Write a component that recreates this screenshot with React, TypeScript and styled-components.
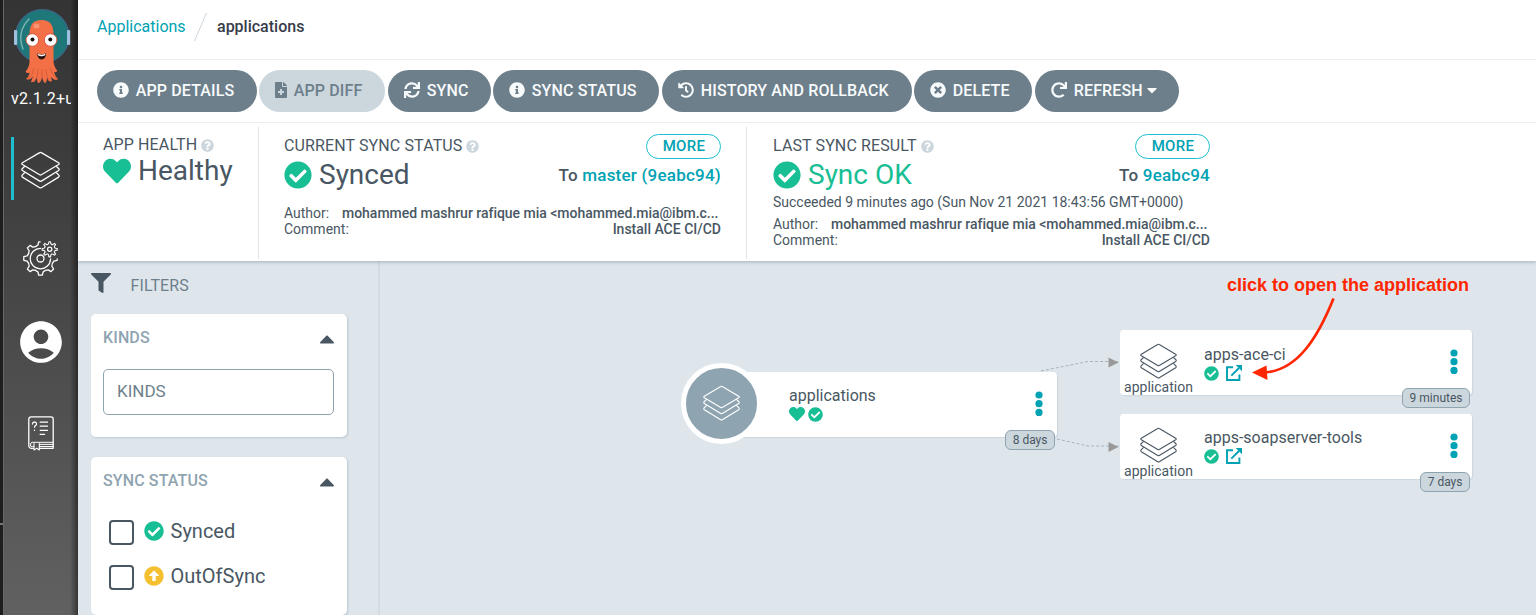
import React from 'react';
import styled, { createGlobalStyle, css } from 'styled-components';
import {
  FaArrowAltCircleUp, FaCaretDown, FaCaretUp, FaCheckCircle, FaFileMedical, FaFilter, FaHeart,
  FaHistory, FaInfoCircle, FaQuestionCircle, FaRedo, FaSync, FaTimesCircle,
} from 'react-icons/fa';
import { MdAccountCircle } from 'react-icons/md';

const color = {
  ink: '#495763',
  dark: '#363c4a',
  slate: '#6d7f8b',
  mist: '#8fa4b1',
  fog: '#ccd6dd',
  canvas: '#dee6ec',
  teal: '#00a2b3',
  cyan: '#1fbdd0',
  green: '#18be94',
  amber: '#f4c030',
  red: '#ff2600',
};

const GlobalStyle = createGlobalStyle`
  * { box-sizing: border-box; }
  html, body { margin: 0; padding: 0; overflow: hidden; }
  body { font-family: Roboto, 'Liberation Sans', sans-serif; color: ${color.ink}; background: #fff; }
  svg { display: block; flex: none; }
`;

const Page = styled.div`
  display: flex;
  width: 1536px;
  height: 615px;
  overflow: hidden;
`;

const WindowEdge = styled.div`
  width: 4px;
  height: 615px;
  background: linear-gradient(#777, #777) 0 523px / 3px 2px no-repeat #1e1e1e;
  border-right: 1px solid #686868;
`;

const Sidebar = styled.nav`
  display: flex;
  flex-direction: column;
  width: 74px;
  height: 615px;
  background:
    linear-gradient(to right, transparent 66px, rgba(0, 0, 0, 0.45) 74px),
    linear-gradient(#343434, #3f3f3f 32%, #616161);
`;

const Brand = styled.div`
  height: 137px;
  padding: 8px 0 0 7px;
`;

const Version = styled.div`
  width: 60px;
  margin-top: 4px;
  overflow: hidden;
  white-space: nowrap;
  color: #fff;
  font-size: 16px;
  line-height: 20px;
  letter-spacing: 0.3px;
`;

const NavItem = styled.a<{ $height: number; $active?: boolean }>`
  display: flex;
  align-items: center;
  justify-content: center;
  width: 56px;
  height: ${p => p.$height}px;
  margin-left: 7px;
  padding-top: ${p => (p.$active ? 3 : 0)}px;
  border-left: 3px solid ${p => (p.$active ? color.cyan : 'transparent')};
  color: #fff;
`;

const Main = styled.main`
  flex: 1;
  display: flex;
  flex-direction: column;
  min-width: 0;
`;

const Breadcrumb = styled.header`
  display: flex;
  align-items: center;
  height: 60px;
  padding: 0 0 6px 19px;
  border-bottom: 1px solid #eceeef;
  font-size: 16px;
  background: #fff;
`;

const CrumbLink = styled.a`
  color: ${color.teal};
  width: 97px;
`;

const CrumbCurrent = styled.span`
  margin-left: 10px;
  color: ${color.dark};
  font-weight: 500;
`;

const Toolbar = styled.div`
  display: flex;
  height: 63px;
  padding: 10px 0 0 19px;
  border-bottom: 1px solid #eceeef;
  background: #fff;
`;

const ToolButton = styled.button<{ $width: number; $iconWidth: number; $disabled?: boolean }>`
  display: flex;
  align-items: center;
  width: ${p => p.$width}px;
  height: 42px;
  margin-right: 2px;
  padding: 0 0 2px 16px;
  border: 0;
  border-radius: 21px;
  background: ${p => (p.$disabled ? color.fog : color.slate)};
  color: ${p => (p.$disabled ? color.slate : '#f8fbfc')};
  font: 500 16px Roboto, sans-serif;
  letter-spacing: 0.12px;
  white-space: nowrap;
  &:nth-child(even) { margin-right: 3px; }
  svg:first-child { width: ${p => p.$iconWidth}px; }
`;

const ToolLabel = styled.span`
  margin: 0 1px 0 6.8px;
`;

const StatusBar = styled.section`
  position: relative;
  display: flex;
  height: 138px;
  padding-top: 4px;
  background: #fff;
  box-shadow: 0 1px 4px rgba(70, 90, 105, 0.4);
  clip-path: inset(0 0 -8px 0);
`;

const StatusPanel = styled.div<{ $width: number; $last?: boolean }>`
  width: ${p => p.$width}px;
  height: 132px;
  padding: ${p => (p.$last ? '7px 25px 0 26px' : '7px 25px 0 25px')};
  ${p => !p.$last && css`border-right: 1px solid #dee6ec;`}
`;

const Row = styled.div<{ $height: number }>`
  display: flex;
  align-items: center;
  justify-content: space-between;
  height: ${p => p.$height}px;
`;

const PanelTitle = styled.div`
  display: flex;
  align-items: center;
  gap: 4px;
  font-size: 16px;
  line-height: 20px;
  letter-spacing: 0.12px;
  white-space: nowrap;
  svg { color: ${color.fog}; margin-top: 1px; }
`;

const StatusValue = styled.div<{ $ok?: boolean }>`
  display: flex;
  align-items: center;
  gap: 7px;
  font-size: 28px;
  line-height: 32px;
  color: ${p => (p.$ok ? color.green : color.ink)};
  svg { color: ${color.green}; margin-top: -1px; }
`;

const MoreButton = styled.button`
  width: 75px;
  height: 25px;
  padding: 0 0 0 1px;
  border: 1px solid ${color.cyan};
  border-radius: 13px;
  background: #fff;
  color: ${color.teal};
  font: 500 15px/22px Roboto, sans-serif;
  letter-spacing: 0.3px;
`;

const Target = styled.div`
  font-size: 17px;
  font-weight: 500;
  letter-spacing: 0.22px;
  a { color: ${color.teal}; }
`;

const Meta = styled.div<{ $top: number }>`
  margin-top: ${p => p.$top}px;
  font-size: 14px;
  line-height: 16px;
`;

const MetaRow = styled.div`
  display: flex;
  justify-content: space-between;
  white-space: nowrap;
  b { font-weight: 500; }
`;

const Author = styled.b`
  width: 379px;
  letter-spacing: -0.02px;
`;

const Finished = styled.div`
  font-size: 14px;
  line-height: 18px;
  margin-top: 1px;
  white-space: nowrap;
`;

const Workspace = styled.div`
  display: flex;
  flex: 1;
  min-height: 0;
  background: ${color.canvas};
`;

const Filters = styled.aside`
  width: 302px;
  padding: 12px 31px 0 13px;
  border-right: 2px solid #d3dce3;
`;

const FiltersHead = styled.div`
  display: flex;
  align-items: flex-start;
  gap: 19.5px;
  height: 41px;
  font-size: 16px;
  line-height: 25px;
  letter-spacing: 0.1px;
  color: ${color.slate};
  svg { color: ${color.ink}; }
`;

const Card = styled.section<{ $height: number }>`
  height: ${p => p.$height}px;
  margin-bottom: 20px;
  padding: 11px 8px 0 12px;
  border-radius: 5px;
  background: #fff;
  box-shadow: 1px 1px 2px rgba(90, 110, 125, 0.25);
`;

const CardHead = styled.div`
  display: flex;
  justify-content: space-between;
  align-items: center;
  height: 24px;
  font-size: 16px;
  font-weight: 500;
  letter-spacing: 0.12px;
  color: ${color.mist};
  svg { color: ${color.ink}; margin-top: 3px; }
`;

const KindsInput = styled.div`
  height: 46px;
  margin: 20px 5px 0 0;
  padding-left: 13px;
  border: 1px solid ${color.mist};
  border-radius: 5px;
  font-size: 17px;
  line-height: 43px;
  color: ${color.slate};
`;

const CheckList = styled.div`
  padding: 28px 0 0 6px;
`;

const CheckRow = styled.label`
  display: flex;
  align-items: center;
  height: 25px;
  margin-bottom: 20px;
  font-size: 20px;
`;

const Box = styled.span`
  width: 25px;
  height: 25px;
  margin-right: 10px;
  border: 2px solid ${color.ink};
  border-radius: 4px;
`;

const CheckText = styled.span`
  margin: -3px 0 0 6.5px;
`;

const StateIcon = styled.span<{ $color: string }>`
  margin-top: -4px;
  color: ${p => p.$color};
`;

const Graph = styled.section`
  position: relative;
  flex: 1;
`;

const Overlay = styled.svg`
  position: absolute;
  left: 0;
  top: 0;
`;

const Node = styled.article<{ $x: number; $y: number; $width: number }>`
  position: absolute;
  left: ${p => p.$x}px;
  top: ${p => p.$y}px;
  width: ${p => p.$width}px;
  height: 65px;
  display: flex;
  border-radius: 4px;
  background: #fff;
  box-shadow: 1px 1px 1px ${color.fog};
`;

const RootBadge = styled.div`
  display: flex;
  align-items: center;
  justify-content: center;
  width: 81px;
  height: 81px;
  margin: -9px 0 0 -40px;
  border: 5px solid #fff;
  border-radius: 50%;
  background: ${color.mist};
  color: #fff;
`;

const KindIcon = styled.div`
  display: flex;
  flex-direction: column;
  align-items: center;
  width: 77px;
  padding-top: 13px;
  font-size: 14px;
  line-height: 14px;
`;

const NodeBody = styled.div<{ $left: number; $top: number }>`
  flex: 1;
  padding: ${p => p.$top}px 0 0 ${p => p.$left}px;
  font-size: 16px;
  line-height: 18px;
`;

const NodeIcons = styled.div<{ $gap: number }>`
  display: flex;
  gap: ${p => p.$gap}px;
  align-items: center;
  height: 18px;
  color: ${color.green};
`;

const Dots = styled.svg`
  margin: 19px 14px 0 0;
`;

const Age = styled.span`
  position: absolute;
  right: 2px;
  bottom: -13px;
  height: 20px;
  padding: 0 6.5px;
  border: 1px solid ${color.mist};
  border-radius: 6px;
  background: ${color.fog};
  font-size: 12px;
  line-height: 18px;
`;

const Note = styled.div`
  position: absolute;
  left: 847px;
  top: 14px;
  color: ${color.red};
  font: bold 18px/20px 'Liberation Sans', sans-serif;
  white-space: nowrap;
`;

function Layers({ size = 39, weight = 1.15 }: { size?: number; weight?: number }) {
  return (
    <svg width={size} height={size} viewBox="0 0 39 38" fill="none" stroke="currentColor" strokeWidth={weight} strokeLinejoin="round">
      <path d="M18.7 1.1Q19.5.6 20.3 1.1L37.6 11.3Q38.8 12.1 37.6 13L20.3 23.3Q19.5 23.8 18.7 23.3L1.4 13Q.2 12.1 1.4 11.3Z" />
      <path d="M3.8 14.7L1.4 16.9Q.2 18 1.4 19L18.7 29.6Q19.5 30.1 20.3 29.6L37.6 19Q38.8 18 37.6 16.9L35.2 14.7" />
      <path d="M3.8 21L1.4 23.4Q.2 24.6 1.4 25.6L18.7 36.2Q19.5 36.7 20.3 36.2L37.6 25.6Q38.8 24.6 37.6 23.4L35.2 21" />
    </svg>
  );
}

function gear(cx: number, cy: number, inner: number, outer: number, teeth: number) {
  const step = (Math.PI * 2) / teeth;
  const at = (r: number, a: number) => `${(cx + r * Math.sin(a)).toFixed(2)} ${(cy - r * Math.cos(a)).toFixed(2)}`;
  let d = '';
  for (let i = 0; i < teeth; i += 1) {
    const a = i * step;
    d += `${i ? 'L' : 'M'}${at(outer, a - step * 0.14)}L${at(outer, a + step * 0.14)}`;
    d += `L${at(inner + 0.5, a + step * 0.24)}Q${at(inner - 0.9, a + step * 0.5)} ${at(inner + 0.5, a + step * 0.76)}`;
  }
  return `${d}Z`;
}

function Gears() {
  return (
    <svg width="36" height="36" viewBox="0 0 36 36" fill="none" stroke="currentColor" strokeWidth="1.3" strokeLinejoin="round" strokeLinecap="round">
      <clipPath id="open"><path d="M0 0H17.6V9L20 16L28 18.5H36V36H0Z" /></clipPath>
      <g clipPath="url(#open)"><path d={gear(17.5, 18.5, 13.2, 16.8, 8)} /></g>
      <path d="M17.5 8.4A10.2 10.2 0 1 0 27.6 19" />
      <circle cx="17.5" cy="18.5" r="3.5" />
      <path d={gear(26.7, 9.3, 5.4, 7.6, 8)} strokeWidth="1.1" />
      <circle cx="26.7" cy="9.3" r="2.1" />
    </svg>
  );
}

function Manual() {
  return (
    <svg width="26" height="35" viewBox="0 0 26 35" fill="none" stroke="currentColor" strokeWidth="1.3" strokeLinecap="round" strokeLinejoin="round">
      <path d="M5.5 32.3H3.4A2.5 2.5 0 0 1 .8 29.8V3.1A2.4 2.4 0 0 1 3.2.8H23Q25.2.8 25.2 3V32.3H11.5" />
      <path d="M25 26.3H4Q2.5 26.5 2.5 29T4.3 30.5H5.5M11.5 30.5H25M11.5 28.4H25" strokeWidth="1" />
      <path d="M6 27.5V34L8.7 32.2L11.3 34V27.5" strokeWidth="1.1" />
      <path d="M12.2 6.2H19.5M12.2 10.2H19.5M12.2 14.3H19.5M12.2 18.4H16.5" />
      <path d="M4.4 8Q4.6 6 6.5 6T8.6 8Q8.5 9 7.3 9.7Q6.5 10.2 6.5 11.2M6.5 14.2V14.4" />
    </svg>
  );
}

function Octopus() {
  return (
    <svg width="60" height="77" viewBox="0 0 60 77">
      <circle cx="31.3" cy="28.2" r="26.6" fill="#1e7779" stroke="#3b6585" strokeWidth="1.4" />
      <path d="M12 41Q5.5 24 18 11" fill="none" stroke="#7fb3b4" strokeWidth="1.4" strokeLinecap="round" />
      <rect x="3" y="22" width="3.2" height="15" rx="1" fill="#9fc1df" />
      <rect x="56" y="22" width="3.2" height="15" rx="1" fill="#9fc1df" />
      <path d="M18.5 27Q18 12 30.5 12T42.5 27V54Q43.5 60 46.5 63Q45 64.5 43 64Q44 68 47 71Q44 73.5 40 69L41 73.5Q37 74 36 69Q36 73 34.5 75Q32.5 75 31 69Q30 75 27 75Q26 74 26 69Q24 75 20 74L22 68Q19 73 15 71Q18 69 18.5 64.5Q16 66 14.5 63.5Q18 60 18.5 54Z" fill="#f37047" />
      <path d="M23 60Q23 66 17 71M27 61Q28 68 23 74M31 61V70M35 61Q35 69 38 73M39 60Q41 67 46 71" fill="none" stroke="#cf5934" strokeWidth=".8" />
      <ellipse cx="25.5" cy="18" rx="3" ry="2.5" fill="#f99d80" opacity=".8" />
      <circle cx="21.3" cy="32" r="6.3" fill="#fff" stroke="#d94f35" strokeWidth=".9" />
      <circle cx="39.6" cy="32" r="6.3" fill="#fff" stroke="#d94f35" strokeWidth=".9" />
      <circle cx="21.5" cy="31.5" r="2" fill="#111" />
      <circle cx="39.3" cy="31.5" r="2" fill="#111" />
      <path d="M26 45Q30.5 48 35 45Q35 51 30.5 51.5Q26.5 51 26 45Z" fill="#2a1512" />
      <path d="M26.5 45.5Q30.5 48 34.5 45.5L34 47.3Q30.5 49.3 27 47.3Z" fill="#fff" />
    </svg>
  );
}

function OpenLink() {
  return (
    <svg width="16" height="16" viewBox="0 0 16 16" fill="none" stroke={color.teal} strokeWidth="1.9">
      <path d="M7 2.3H1V15H13.4V9.5" />
      <path d="M5.3 10.7L13 3" />
      <path d="M9.7 0H16V6.3Z" fill={color.teal} stroke="none" />
    </svg>
  );
}

const tools = [
  { label: 'APP DETAILS', icon: FaInfoCircle, width: 160 },
  { label: 'APP DIFF', icon: FaFileMedical, width: 126, iconWidth: 12, disabled: true },
  { label: 'SYNC', icon: FaSync, width: 103 },
  { label: 'SYNC STATUS', icon: FaInfoCircle, width: 166 },
  { label: 'HISTORY AND ROLLBACK', icon: FaHistory, width: 250 },
  { label: 'DELETE', icon: FaTimesCircle, width: 118 },
  { label: 'REFRESH', icon: FaRedo, width: 144, menu: true },
];

const children = [
  { name: 'apps-ace-ci', age: '9 minutes', y: 69, top: 16 },
  { name: 'apps-soapserver-tools', age: '7 days', y: 153, top: 15 },
];

function Commit() {
  return (
    <>
      <MetaRow><span>Author:</span><Author>mohammed mashrur rafique mia &lt;mohammed.mia@ibm.c...</Author></MetaRow>
      <MetaRow><span>Comment:</span><b>Install ACE CI/CD</b></MetaRow>
    </>
  );
}

function NodeMenu() {
  return (
    <Dots width="8" height="26" fill={color.teal}>
      <circle cx="4" cy="4" r="3.6" />
      <circle cx="4" cy="12.7" r="3.6" />
      <circle cx="4" cy="21.4" r="3.6" />
    </Dots>
  );
}

export default function App() {
  return (
    <Page>
      <GlobalStyle />
      <WindowEdge />
      <Sidebar>
        <Brand>
          <Octopus />
          <Version>v2.1.2+u</Version>
        </Brand>
        <NavItem $height={63} $active><Layers weight={1.3} /></NavItem>
        <NavItem $height={115}><Gears /></NavItem>
        <NavItem $height={54}><MdAccountCircle size={50} /></NavItem>
        <NavItem $height={129}><Manual /></NavItem>
      </Sidebar>
      <Main>
        <Breadcrumb>
          <CrumbLink>Applications</CrumbLink>
          <svg width="13" height="28" viewBox="0 0 13 28"><path d="M12.5 0L.5 28" stroke="#ccd6dd" /></svg>
          <CrumbCurrent>applications</CrumbCurrent>
        </Breadcrumb>
        <Toolbar>
          {tools.map(({ label, icon: Icon, width, iconWidth = 16, disabled, menu }) => (
            <ToolButton key={label} $width={width} $iconWidth={iconWidth} $disabled={disabled}>
              <Icon size={16} />
              <ToolLabel>{label}</ToolLabel>
              {menu && <FaCaretDown size={16} />}
            </ToolButton>
          ))}
        </Toolbar>
        <StatusBar>
          <StatusPanel $width={181}>
            <Row $height={21}><PanelTitle>APP HEALTH <FaQuestionCircle size={13} /></PanelTitle></Row>
            <StatusValue><FaHeart size={28} />Healthy</StatusValue>
          </StatusPanel>
          <StatusPanel $width={488}>
            <Row $height={24}>
              <PanelTitle>CURRENT SYNC STATUS <FaQuestionCircle size={13} /></PanelTitle>
              <MoreButton>MORE</MoreButton>
            </Row>
            <Row $height={34}>
              <StatusValue><FaCheckCircle size={28} />Synced</StatusValue>
              <Target>To <a>master (9eabc94)</a></Target>
            </Row>
            <Meta $top={13}><Commit /></Meta>
          </StatusPanel>
          <StatusPanel $width={488} $last>
            <Row $height={24}>
              <PanelTitle>LAST SYNC RESULT <FaQuestionCircle size={13} /></PanelTitle>
              <MoreButton>MORE</MoreButton>
            </Row>
            <Row $height={34}>
              <StatusValue $ok><FaCheckCircle size={28} />Sync OK</StatusValue>
              <Target>To <a>9eabc94</a></Target>
            </Row>
            <Finished>Succeeded 9 minutes ago (Sun Nov 21 2021 18:43:56 GMT+0000)</Finished>
            <Meta $top={5}><Commit /></Meta>
          </StatusPanel>
        </StatusBar>
        <Workspace>
          <Filters>
            <FiltersHead><FaFilter size={20} />FILTERS</FiltersHead>
            <Card $height={123}>
              <CardHead>KINDS<FaCaretUp size={24} /></CardHead>
              <KindsInput>KINDS</KindsInput>
            </Card>
            <Card $height={158}>
              <CardHead>SYNC STATUS<FaCaretUp size={24} /></CardHead>
              <CheckList>
                <CheckRow><Box /><StateIcon $color={color.green}><FaCheckCircle size={20} /></StateIcon><CheckText>Synced</CheckText></CheckRow>
                <CheckRow><Box /><StateIcon $color={color.amber}><FaArrowAltCircleUp size={20} /></StateIcon><CheckText>OutOfSync</CheckText></CheckRow>
              </CheckList>
            </Card>
          </Filters>
          <Graph>
            <Overlay width="1156" height="354" viewBox="380 261 1156 354" fill="none">
              <path d="M1041 371L1088 361.5H1119M1057 439L1088 446H1119" stroke="#a5b4be" strokeDasharray="3 2" />
              <path d="M1108.5 357.5L1118.5 362.5L1108.5 367.5ZM1108.5 442L1118.5 447L1108.5 452Z" fill="#999" />
            </Overlay>
            <Node $x={341} $y={111} $width={336}>
              <RootBadge><Layers size={37} /></RootBadge>
              <NodeBody $left={27} $top={15}>
                applications
                <NodeIcons $gap={3}><FaHeart size={16} /><FaCheckCircle size={15} /></NodeIcons>
              </NodeBody>
              <NodeMenu />
              <Age>8 days</Age>
            </Node>
            {children.map(child => (
              <Node key={child.name} $x={740} $y={child.y} $width={352}>
                <KindIcon><Layers size={37} /><span>application</span></KindIcon>
                <NodeBody $left={7} $top={child.top}>
                  {child.name}
                  <NodeIcons $gap={7}><FaCheckCircle size={15} /><OpenLink /></NodeIcons>
                </NodeBody>
                <NodeMenu />
                <Age>{child.age}</Age>
              </Node>
            ))}
            <Note>click to open the application</Note>
            <Overlay width="1156" height="354" viewBox="380 261 1156 354" fill="none">
              <path d="M1333.5 298.5C1318 337 1298 370 1265 372.5" stroke={color.red} strokeWidth="2.7" />
              <path d="M1252 372.5L1266.5 365.5L1267.5 380Z" fill={color.red} />
            </Overlay>
          </Graph>
        </Workspace>
      </Main>
    </Page>
  );
}
